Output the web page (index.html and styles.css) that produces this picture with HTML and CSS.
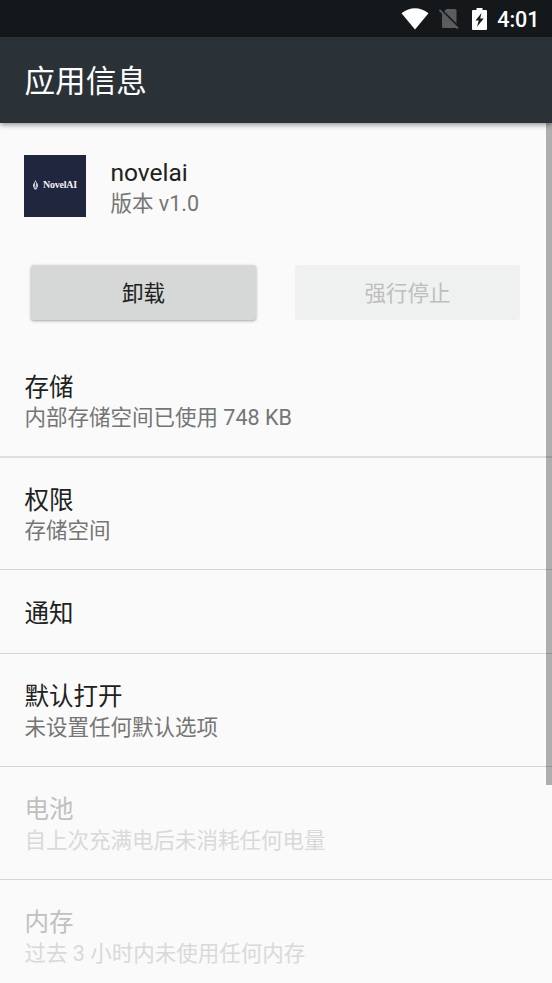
FILE: index.html
```html
<!DOCTYPE html>
<html lang="zh-CN">
<head>
<meta charset="utf-8">
<title>应用信息</title>
<link rel="stylesheet" href="styles.css">
</head>
<body>
<div class="status-bar">
  <svg class="wifi" width="28" height="22" viewBox="0 0 28 22"><path d="M.5 5.200Q14-4.600 27.500 5.200L14 21.500Z" fill="#fff"/></svg>
  <svg class="sim" width="20" height="22" viewBox="0 0 20 22"><path d="M7.500 1H16Q17.500 1 17.500 2.500V20H4.500Q3 20 3 18.500V5.500Z" fill="#5a5c5e"/><path d="M2 1.500L20.500 20" stroke="#14181b" stroke-width="2"/><path d="M.5 2L19 20.500" stroke="#5a5c5e" stroke-width="1.800"/></svg>
  <svg class="battery" width="15" height="22" viewBox="0 0 15 22"><path fill-rule="evenodd" d="M4.500 0H10.500V2H14Q15 2 15 3V21Q15 22 14 22H1Q0 22 0 21V3Q0 2 1 2H4.500ZM9.500 5L3.500 12.500H6.700L5 18.800L11.700 10.500H8.200Z" fill="#fff"/></svg>
  <span class="clock">4:01</span>
</div>
<header class="app-bar"><h1>应用信息</h1></header>
<main class="content">
  <section class="app">
    <div class="app-icon">
      <svg width="7" height="10" viewBox="0 0 7 10"><path d="M3.500 0L5 3Q7 5 5.500 7.500L4.500 9.500H2.500L1.500 7.500Q0 5 2 3Z" fill="#c7cad5"/><path d="M3.500 2V6M2.500 7H4.500" stroke="#20263d" stroke-width=".9"/></svg>
      <span>NovelAI</span>
    </div>
    <div class="app-text"><div class="name">novelai</div><div class="summary">版本 v1.0</div></div>
  </section>
  <div class="actions">
    <button class="button">卸载</button>
    <button class="button off" disabled>强行停止</button>
  </div>
  <section class="row first"><div class="title">存储</div><div class="summary">内部存储空间已使用 748 KB</div></section>
  <section class="row"><div class="title">权限</div><div class="summary">存储空间</div></section>
  <section class="row single"><div class="title">通知</div></section>
  <section class="row"><div class="title">默认打开</div><div class="summary">未设置任何默认选项</div></section>
  <section class="row disabled"><div class="title">电池</div><div class="summary">自上次充满电后未消耗任何电量</div></section>
  <section class="row disabled"><div class="title">内存</div><div class="summary">过去 3 小时内未使用任何内存</div></section>
  <div class="scrollbar"></div>
</main>
</body>
</html>
```
FILE: styles.css
```css
* { box-sizing: border-box; }
body {
  margin: 0;
  height: 983px;
  overflow: hidden;
  display: flex;
  flex-direction: column;
  background: #fafafa;
  color: #212121;
  font-family: Roboto, "Noto Sans CJK SC", sans-serif;
}
.status-bar {
  flex: none;
  height: 37px;
  padding-right: 12.5px;
  background: #14181b;
  color: #fff;
  display: flex;
  align-items: center;
  justify-content: flex-end;
}
.wifi { margin-right: 9.5px; }
.sim { margin-right: 13.5px; }
.battery { margin-right: 10px; }
.clock { font-size: 21.5px; font-weight: 500; line-height: 37px; padding-top: 2px; }
.app-bar {
  flex: none;
  height: 86px;
  padding: 4px 0 0 24.5px;
  display: flex;
  align-items: center;
  background: #2a3238;
  color: #fff;
  box-shadow: 0 2px 5px rgba(0, 0, 0, .4);
  z-index: 1;
}
h1 { margin: 0; font-size: 30.6px; font-weight: 400; line-height: 40px; }
.content { flex: 1; position: relative; min-height: 0; }
.app { height: 141px; padding: 32px 24.5px 0 24px; display: flex; }
.app-icon {
  width: 62px;
  height: 61.5px;
  margin-right: 24.5px;
  background: #20263d;
  color: #f1f1f4;
  display: flex;
  align-items: center;
  justify-content: center;
  gap: 4px;
  padding-bottom: 1px;
  font: bold 10px/14px "Liberation Serif", serif;
}
.app-icon span { width: 35px; white-space: nowrap; letter-spacing: -.25px; }
.name { font-size: 24.5px; line-height: 31px; padding-top: 2px; }
.summary { font-size: 21.5px; line-height: 31px; color: #757575; white-space: nowrap; }
.title { font-size: 24.5px; line-height: 31px; margin-bottom: -.9px; }
.actions { height: 80px; padding: 1px 32px 0 31px; display: flex; gap: 39px; }
.button {
  flex: 1;
  height: 55px;
  border: 0;
  border-radius: 3px;
  padding: 2px 0 0;
  background: #d6d8d7;
  color: #212121;
  font: 400 21.5px/53px Roboto, "Noto Sans CJK SC", sans-serif;
  box-shadow: 0 1px 3px rgba(0, 0, 0, .35);
}
.button.off { background: #eff1f0; color: #bdbebd; box-shadow: none; }
.row { height: 113px; padding: 27.9px 24.5px 0; border-bottom: 1px solid #d6d6d6; }
.row.first { height: 114px; margin-bottom: -1px; border-bottom: 2px solid #dedede; }
.row.single { height: 83.5px; }
.disabled .title { color: #c0c0c0; }
.disabled .summary { color: #d9d9d9; }
.scrollbar {
  position: absolute;
  top: 0;
  right: 0;
  width: 6px;
  height: 662px;
  background: rgba(0, 0, 0, .3);
}
```
